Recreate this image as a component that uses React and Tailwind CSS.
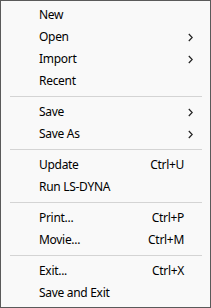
const items = [
  { label: 'New' },
  { label: 'Open', sub: true },
  { label: 'Import', sub: true },
  { label: 'Recent' },
  'sep',
  { label: 'Save', sub: true },
  { label: 'Save As', sub: true },
  'sep',
  { label: 'Update', key: 'Ctrl+U' },
  { label: 'Run LS-DYNA' },
  'sep',
  { label: 'Print...', key: 'Ctrl+P' },
  { label: 'Movie...', key: 'Ctrl+M' },
  'sep',
  { label: 'Exit...', key: 'Ctrl+X' },
  { label: 'Save and Exit' },
];

const Chevron = () => (
  <svg width="5" height="9" viewBox="0 0 5 9" className="text-[#222]">
    <path d="M0.8 1 L4.2 4.5 L0.8 8" fill="none" stroke="currentColor" strokeWidth="1.2" />
  </svg>
);

export default function App() {
  return (
    <div
      className="w-[211px] h-[308px] bg-[#f9f9f9] border border-[#5a5a5a] py-[3px] text-[12px] tracking-[-0.3px] text-black"
      style={{ fontFamily: '"Noto Sans", "Open Sans", sans-serif' }}
    >
      {items.map((it, i) =>
        it === 'sep' ? (
          <div key={i} className="h-[9px] pt-[4px] pl-[9px] pr-[8px]">
            <div className="h-px bg-[#d4d4d4]" />
          </div>
        ) : (
          <div key={i} className="h-[22px] flex items-center pl-[38px] pr-[17px]">
            <span className="flex-1 leading-none">{it.label}</span>
            {it.key && <span className="leading-none mr-[9px]">{it.key}</span>}
            {it.sub && (
              <span className="flex items-center">
                <Chevron />
              </span>
            )}
          </div>
        )
      )}
    </div>
  );
}
